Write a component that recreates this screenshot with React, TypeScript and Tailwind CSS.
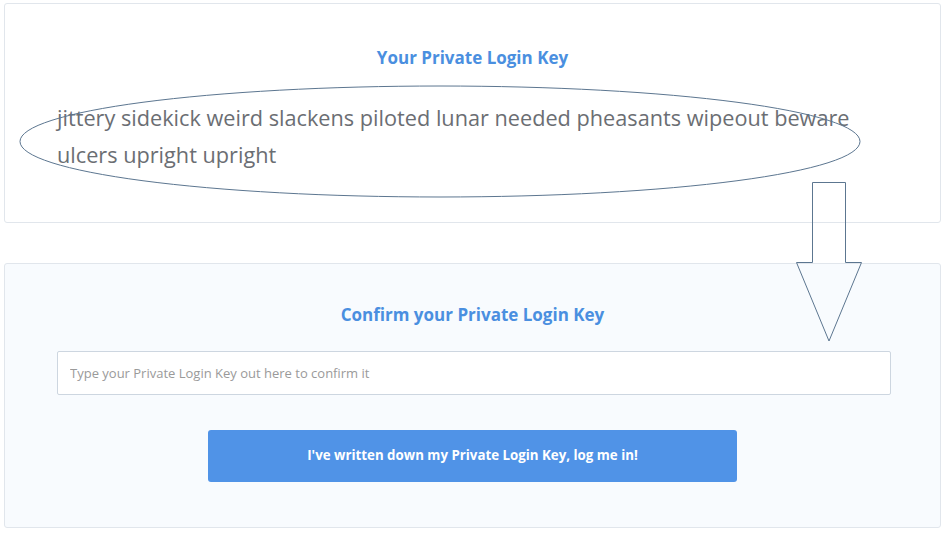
import { useState } from "react";

const WORDS =
  "jittery sidekick weird slackens piloted lunar needed pheasants wipeout beware ulcers upright upright";

// Hand-drawn annotation: an ellipse round the key, and an arrow pointing
// down at the confirm box. Sits over both cards.
function Annotation() {
  return (
    <svg
      className="pointer-events-none absolute left-0 top-0"
      width="945"
      height="542"
      viewBox="0 0 945 542"
      fill="none"
      stroke="#5c7690"
      strokeWidth="1"
    >
      <ellipse cx="440" cy="141.5" rx="420" ry="55.5" />
      <path d="M812.5 182.5 H845.5 V262.5 H861.5 L829 341 L796.5 262.5 H812.5 Z" />
    </svg>
  );
}

export default function App() {
  const [key, setKey] = useState("");

  return (
    <div
      className="relative h-[542px] w-[945px] overflow-hidden bg-white"
      style={{ fontFamily: "'Open Sans', 'Liberation Sans', sans-serif" }}
    >
      <div className="flex flex-col gap-[40px] px-[4px] pt-[3px]">
        {/* The generated key */}
        <section className="h-[220px] rounded-[3px] border border-[#e1e6ec] bg-white px-[52px] pt-[42px]">
          <h2 className="text-center text-[17px] font-bold leading-[24px] text-[#4a8fe0]">
            Your Private Login Key
          </h2>
          <p className="mt-[29px] text-[21.7px] leading-[37px] text-[#6b6e73]">
            {WORDS}
          </p>
        </section>

        {/* Confirm step */}
        <section className="h-[265px] rounded-[3px] border border-[#e1e6ec] bg-[#f8fbfe] px-[52px]">
          <h2 className="mt-[39px] text-center text-[17px] font-bold leading-[24px] text-[#4a8fe0]">
            Confirm your Private Login Key
          </h2>
          <input
            value={key}
            onChange={(e) => setKey(e.target.value)}
            placeholder="Type your Private Login Key out here to confirm it"
            className="mt-[24px] block h-[44px] w-[834px] rounded-[2px] border border-[#cdd6e0] bg-white px-[12px] text-[13px] text-[#555] outline-none placeholder:text-[#9a9a9a]"
          />
          <div className="mt-[35px] flex justify-center">
            <button className="h-[52px] w-[529px] rounded-[3px] bg-[#5093e7] text-[13.3px] font-bold text-white">
              I've written down my Private Login Key, log me in!
            </button>
          </div>
        </section>
      </div>
      <Annotation />
    </div>
  );
}
